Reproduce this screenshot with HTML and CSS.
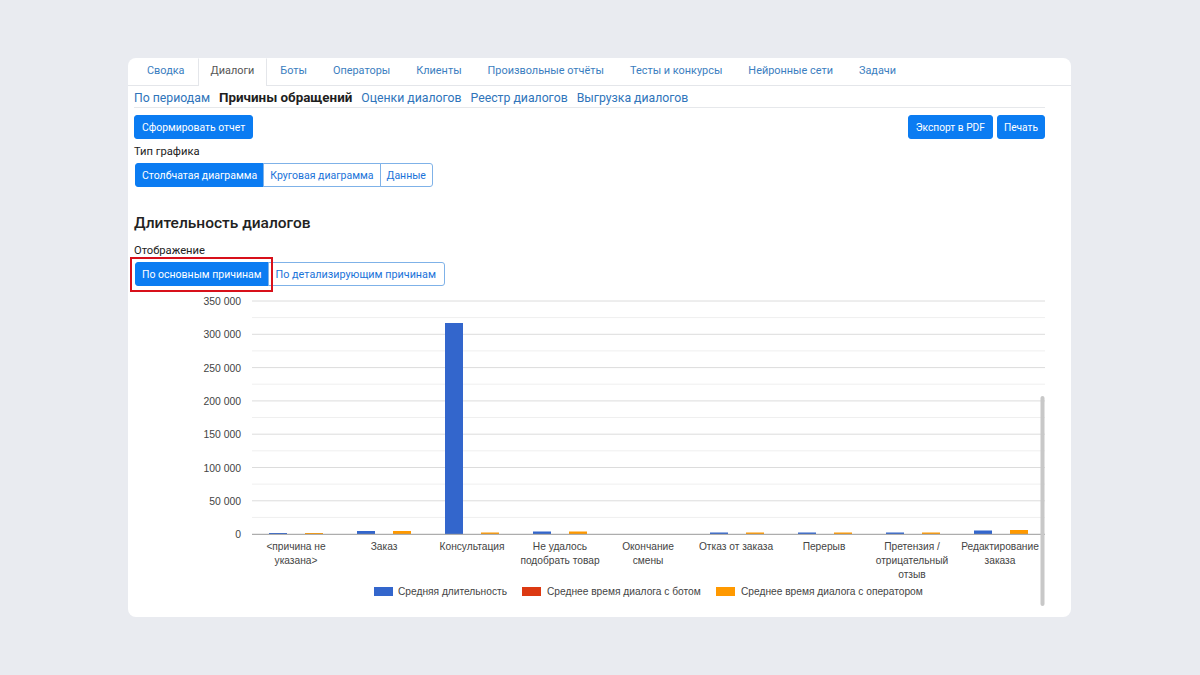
FILE: index.html
```html
<!DOCTYPE html>
<html lang="ru">
<head>
<meta charset="utf-8">
<title>Диалоги — причины обращений</title>
<link rel="stylesheet" href="styles.css">
</head>
<body>
<div class="card">
  <ul class="tabs">
    <li class="tab">Сводка</li>
    <li class="tab active">Диалоги</li>
    <li class="tab">Боты</li>
    <li class="tab">Операторы</li>
    <li class="tab">Клиенты</li>
    <li class="tab">Произвольные отчёты</li>
    <li class="tab">Тесты и конкурсы</li>
    <li class="tab">Нейронные сети</li>
    <li class="tab">Задачи</li>
  </ul>
  <div class="content">
    <nav class="subnav">
      <a class="sublink">По периодам</a>
      <a class="sublink current">Причины обращений</a>
      <a class="sublink">Оценки диалогов</a>
      <a class="sublink">Реестр диалогов</a>
      <a class="sublink">Выгрузка диалогов</a>
    </nav>
    <div class="toolbar">
      <button class="btn">Сформировать отчет</button>
      <div class="toolbar-right">
        <button class="btn">Экспорт в PDF</button>
        <button class="btn btn-narrow">Печать</button>
      </div>
    </div>
    <div class="label">Тип графика</div>
    <div class="btn-group">
      <button class="seg active">Столбчатая диаграмма</button>
      <button class="seg">Круговая диаграмма</button>
      <button class="seg">Данные</button>
    </div>
    <h2 class="heading">Длительность диалогов</h2>
    <div class="label">Отображение</div>
    <div class="btn-group">
      <span class="highlight"></span>
      <button class="seg active">По основным причинам</button>
      <button class="seg seg-wide">По детализирующим причинам</button>
    </div>
    <div class="chart">
      <svg width="911" height="318" viewBox="0 0 911 318">
        <g class="minor">
          <line x1="118" x2="911" y1="26.6" y2="26.6"/>
          <line x1="118" x2="911" y1="59.9" y2="59.9"/>
          <line x1="118" x2="911" y1="93.2" y2="93.2"/>
          <line x1="118" x2="911" y1="126.5" y2="126.5"/>
          <line x1="118" x2="911" y1="159.8" y2="159.8"/>
          <line x1="118" x2="911" y1="193.1" y2="193.1"/>
          <line x1="118" x2="911" y1="226.4" y2="226.4"/>
        </g>
        <g class="major">
          <line x1="118" x2="911" y1="10" y2="10"/>
          <line x1="118" x2="911" y1="43.3" y2="43.3"/>
          <line x1="118" x2="911" y1="76.6" y2="76.6"/>
          <line x1="118" x2="911" y1="109.9" y2="109.9"/>
          <line x1="118" x2="911" y1="143.2" y2="143.2"/>
          <line x1="118" x2="911" y1="176.5" y2="176.5"/>
          <line x1="118" x2="911" y1="209.8" y2="209.8"/>
        </g>
        <g class="ylab">
          <text x="107" y="14">350 000</text>
          <text x="107" y="47.3">300 000</text>
          <text x="107" y="80.6">250 000</text>
          <text x="107" y="113.9">200 000</text>
          <text x="107" y="147.2">150 000</text>
          <text x="107" y="180.5">100 000</text>
          <text x="107" y="213.8">50 000</text>
          <text x="107" y="247.1">0</text>
        </g>
        <g class="bars">
          <rect class="b" x="135" y="242" width="18" height="1"/>
          <rect class="o" x="171" y="242" width="18" height="1"/>
          <rect class="b" x="223" y="240" width="18" height="3"/>
          <rect class="o" x="259" y="240" width="18" height="3"/>
          <rect class="b" x="311" y="32" width="18" height="211"/>
          <rect class="o" x="347" y="241.5" width="18" height="1.5"/>
          <rect class="b" x="399" y="240.5" width="18" height="2.5"/>
          <rect class="o" x="435" y="240.5" width="18" height="2.5"/>
          <rect class="b" x="576" y="241.5" width="18" height="1.5"/>
          <rect class="o" x="612" y="241.5" width="18" height="1.5"/>
          <rect class="b" x="664" y="241.5" width="18" height="1.5"/>
          <rect class="o" x="700" y="241.5" width="18" height="1.5"/>
          <rect class="b" x="752" y="241.5" width="18" height="1.5"/>
          <rect class="o" x="788" y="241.5" width="18" height="1.5"/>
          <rect class="b" x="840" y="239.5" width="18" height="3.5"/>
          <rect class="o" x="876" y="239" width="18" height="4"/>
        </g>
        <line class="base" x1="118" x2="911" y1="243.3" y2="243.3"/>
        <g class="xlab">
          <text x="162" y="259">&lt;причина не</text>
          <text x="162" y="273">указана&gt;</text>
          <text x="250" y="259">Заказ</text>
          <text x="338" y="259">Консультация</text>
          <text x="426" y="259">Не удалось</text>
          <text x="426" y="273">подобрать товар</text>
          <text x="514" y="259">Окончание</text>
          <text x="514" y="273">смены</text>
          <text x="602" y="259">Отказ от заказа</text>
          <text x="690" y="259">Перерыв</text>
          <text x="778" y="259">Претензия /</text>
          <text x="778" y="273">отрицательный</text>
          <text x="778" y="287">отзыв</text>
          <text x="866" y="259">Редактирование</text>
          <text x="866" y="273">заказа</text>
        </g>
        <g class="legend">
          <rect class="b" x="240" y="296" width="19" height="9"/>
          <text x="264" y="304">Средняя длительность</text>
          <rect class="r" x="388" y="296" width="19" height="9"/>
          <text x="413" y="304">Среднее время диалога с ботом</text>
          <rect class="o" x="582" y="296" width="19" height="9"/>
          <text x="607" y="304">Среднее время диалога с оператором</text>
        </g>
        <rect class="scroll" x="906.5" y="105" width="4" height="210" rx="2"/>
      </svg>
    </div>
  </div>
</div>
</body>
</html>
```

FILE: styles.css
```css
* { box-sizing: border-box; }
html, body { margin: 0; padding: 0; }
body {
  background: #e9ebf0;
  font-family: Roboto, "Noto Sans", sans-serif;
  color: #222;
}
.card {
  margin: 58px 0 0 128px;
  width: 943px;
  height: 559px;
  background: #fff;
  border-radius: 8px;
  overflow: hidden;
}
.tabs {
  list-style: none;
  margin: 0;
  padding: 0 0 0 6px;
  display: flex;
  height: 28px;
  border-bottom: 1px solid #e4e6ea;
}
.tab {
  font-size: 10.9px;
  line-height: 24px;
  padding: 0 12px;
  color: #3b7ec0;
  border: 1px solid transparent;
  border-bottom: none;
  height: 28px;
  margin-bottom: -1px;
  white-space: nowrap;
}
.tab.active {
  color: #555;
  background: #fff;
  border-color: #e4e6ea;
  border-top-color: transparent;
}
.content {
  padding: 0 26px 0 6px;
}
.subnav {
  display: flex;
  gap: 9px;
  height: 22px;
  align-items: center;
  border-bottom: 1px solid #e6e8eb;
  padding-top: 2px;
}
.sublink {
  font-size: 12.25px;
  color: #2f74ba;
  white-space: nowrap;
}
.sublink.current {
  color: #1e1e1e;
  font-weight: 700;
  font-size: 13.4px;
}
.toolbar {
  display: flex;
  justify-content: space-between;
  margin-top: 7px;
}
.toolbar-right { display: flex; gap: 4px; }
.btn {
  font-family: inherit;
  font-size: 10.4px;
  height: 24px;
  padding: 0 7px;
  background: #0b7cf2;
  color: #fff;
  border: 1px solid #0b7cf2;
  border-radius: 3px;
  cursor: pointer;
}
.btn-narrow { padding: 0 6px; }
.toolbar-right .btn { font-size: 10.2px; }
.label {
  font-size: 11.2px;
  color: #222;
  margin-top: 6px;
  height: 18px;
  line-height: 14px;
}
.heading + .label { margin-top: 7px; }
.btn-group {
  display: inline-flex;
  position: relative;
  margin-left: 1px;
}
.seg {
  font-family: inherit;
  font-size: 10.5px;
  height: 24px;
  padding: 0 6px;
  background: #fff;
  color: #1a73d9;
  border: 1px solid #7fb2e8;
  margin-left: -1px;
  cursor: pointer;
}
.seg-wide { padding: 0 8px 0 7px; font-size: 10.8px; }
.seg:first-of-type { border-radius: 3px 0 0 3px; margin-left: 0; }
.seg:last-of-type { border-radius: 0 3px 3px 0; }
.seg.active {
  background: #0b7cf2;
  border-color: #0b7cf2;
  color: #fff;
}
.highlight {
  position: absolute;
  left: -5px;
  top: -5px;
  width: 143px;
  height: 35px;
  border: 2px solid #d8101a;
  z-index: 2;
  pointer-events: none;
}
.heading {
  font-size: 15.5px;
  font-weight: 500;
  margin: 25px 0 0 0;
  height: 25px;
  line-height: 22px;
  color: #222;
}
.chart {
  margin-top: 5px;
}
.chart svg { display: block; }
.minor line { stroke: #efefef; stroke-width: 1; }
.major line { stroke: #dcdcdc; stroke-width: 1; }
.base { stroke: #999; stroke-width: 1; }
.ylab text {
  font-family: "Liberation Sans", Arial, sans-serif;
  font-size: 10.4px;
  fill: #444;
  text-anchor: end;
}
.xlab text {
  font-family: "Liberation Sans", Arial, sans-serif;
  font-size: 10.2px;
  fill: #444;
  text-anchor: middle;
}
.legend text {
  font-family: "Liberation Sans", Arial, sans-serif;
  font-size: 10.2px;
  fill: #444;
}
.b { fill: #3366cc; }
.r { fill: #dc3912; }
.o { fill: #ff9900; }
.scroll { fill: #c8c8c8; }
```
